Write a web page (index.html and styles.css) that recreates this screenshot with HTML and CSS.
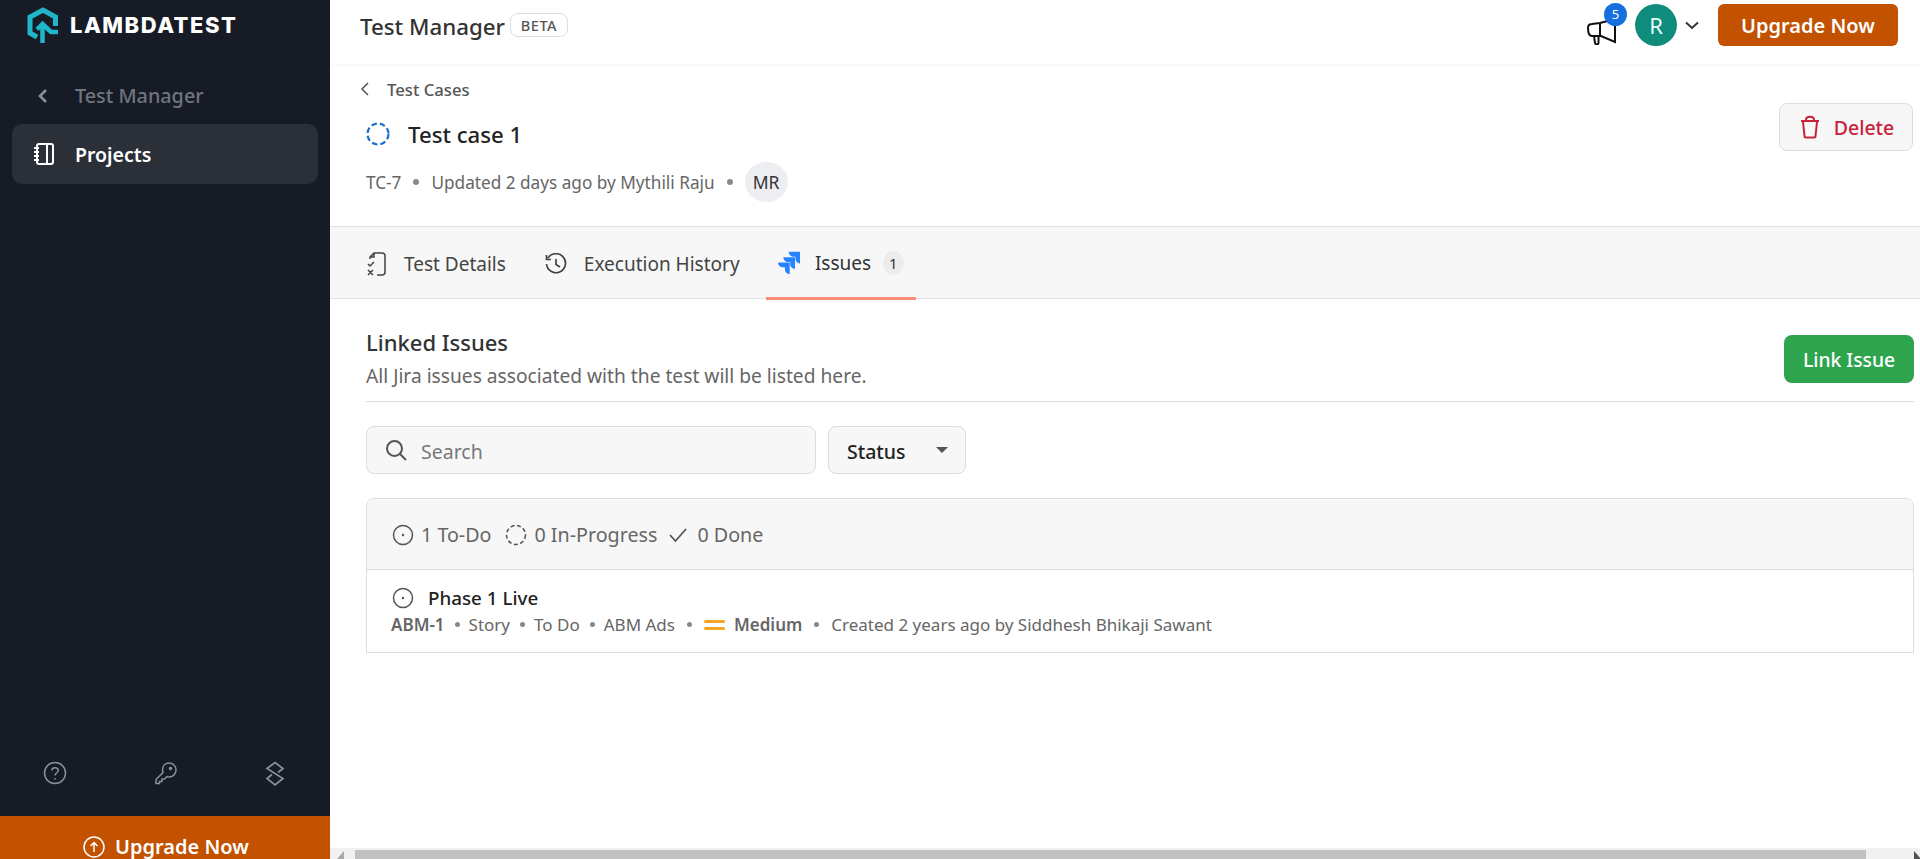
FILE: index.html
```html
<!DOCTYPE html>
<html lang="en">
<head>
  <meta charset="UTF-8" />
  <title>Test Manager</title>
  <link rel="stylesheet" href="styles.css">
</head>
<body>
  <aside class="sidebar">
    <div class="logo">
      <svg class="logo-mark" width="32" height="44" viewBox="0 0 32 44" fill="none" stroke="#1fb6c9" stroke-width="5">
        <path d="M10 34 L3 30 V14 L16 7 L28.500 14 V23" />
        <path d="M15.500 40 V22 M10 26.500 L15.500 21 L24 29 H31" stroke-width="4.500" />
      </svg>
      <span class="logo-text">LAMBDATEST</span>
    </div>
    <div class="side-back">
      <svg width="12" height="16" viewBox="0 0 12 16" fill="none" stroke="#8b9099" stroke-width="2.500"><path d="M9 2 L3 8 L9 14" /></svg>
      <span>Test Manager</span>
    </div>
    <div class="side-item">
      <svg width="22" height="24" viewBox="0 0 22 24" fill="none" stroke="#fff" stroke-width="2">
        <rect x="4" y="2" width="16" height="20" rx="2" />
        <path d="M14 2 V22 M1 6 H6 M1 10 H6 M1 14 H6 M1 18 H6" />
      </svg>
      <span>Projects</span>
    </div>
    <div class="side-icons">
      <svg width="24" height="24" viewBox="0 0 24 24" fill="none" stroke="#8b9099" stroke-width="1.500">
        <circle cx="12" cy="12" r="10.500" />
        <path d="M8.800 9.500 C9 5.800 15.200 5.800 15.200 9.500 C15.200 12 12 12 12 14.500 M12 17 V18.500" />
      </svg>
      <svg width="24" height="24" viewBox="0 0 24 24" fill="none" stroke="#8b9099" stroke-width="1.500">
        <path d="M15 2 C19 2 22 5 22 9 C22 13 19 16 15 16 C14 16 13.500 16 13 15.500 L10.500 18 H8 V20.500 H5.500 V22.500 H2 V18.500 L9 11.500 C8.500 10.500 8.500 10 8.500 9 C8.500 5 11 2 15 2 Z" />
        <circle cx="16.500" cy="7.500" r="1" fill="#8b9099" />
      </svg>
      <svg width="22" height="26" viewBox="0 0 22 26" fill="none" stroke="#8b9099" stroke-width="1.700">
        <path d="M14 11.500 L19 7.500 L11 1.500 L3 7.500 L19 17.500 L11 24 L3 17.500 L8 13.500" />
      </svg>
    </div>
    <div class="side-upgrade">
      <svg width="22" height="22" viewBox="0 0 22 22" fill="none" stroke="#fff" stroke-width="1.500">
        <circle cx="11" cy="11" r="10" />
        <path d="M11 16 V6.500 M7.500 10 L11 6.500 L14.500 10" />
      </svg>
      <span>Upgrade Now</span>
    </div>
  </aside>

  <div class="main">
    <header class="topbar">
      <div class="product">
        <span class="product-name">Test Manager</span>
        <span class="beta">BETA</span>
      </div>
      <div class="top-actions">
        <div class="announce">
          <svg width="34" height="30" viewBox="0 0 34 30" fill="none" stroke="#111" stroke-width="2">
            <path d="M2 13 C2 10 4 9 6 9 L14 8 L29 4 V27 L15 21 H6 C3 21 2 18 2 13 Z M14 8 V21 M8 21 L9 28 C10 30 12 30 12.500 28 V22" />
          </svg>
          <span class="count">5</span>
        </div>
        <span class="avatar">R</span>
        <svg class="caret" width="14" height="9" viewBox="0 0 14 9" fill="none" stroke="#333" stroke-width="2"><path d="M1 1.500 L7 7 L13 1.500" /></svg>
        <button class="btn-upgrade">Upgrade Now</button>
      </div>
    </header>

    <section class="case-head">
      <div class="case-info">
        <div class="crumb">
          <svg width="9" height="14" viewBox="0 0 9 14" fill="none" stroke="#555" stroke-width="1.500"><path d="M8 1 L2 7 L8 13" /></svg>
          <span>Test Cases</span>
        </div>
        <div class="case-title">
          <svg width="24" height="24" viewBox="0 0 24 24" fill="none" stroke="#1a6fc9" stroke-width="2.200" stroke-dasharray="5.500 3"><circle cx="12" cy="12" r="10.500" /></svg>
          <h1>Test case 1</h1>
        </div>
        <div class="case-meta">
          <span>TC-7</span>
          <i class="dot"></i>
          <span>Updated 2 days ago by Mythili Raju</span>
          <i class="dot"></i>
          <span class="initials">MR</span>
        </div>
      </div>
      <button class="btn-delete">
        <svg width="20" height="24" viewBox="0 0 20 24" fill="none" stroke="#c8223a" stroke-width="2">
          <path d="M1 6 H19 M6 5 C6 0.800 14 0.800 14 5 M3 7 L4.500 21 C4.500 22 5 22.500 6 22.500 H14 C15 22.500 15.500 22 15.500 21 L17 7" />
        </svg>
        <span>Delete</span>
      </button>
    </section>

    <nav class="tabs">
      <div class="tab">
        <svg width="20" height="24" viewBox="0 0 20 24" fill="none" stroke="#444" stroke-width="1.500">
          <path d="M3 7 V5 L7 1 H15 C17 1 18 2 18 4 V20 C18 22 17 23 15 23 H10 M7 1 V5 H3 M1 12 L3 14 L7 10 M1 18 L6 23 M6 18 L1 23" />
        </svg>
        <span>Test Details</span>
      </div>
      <div class="tab">
        <svg width="22" height="22" viewBox="0 0 22 22" fill="none" stroke="#444" stroke-width="1.700">
          <path d="M3 5 A9.500 9.500 0 1 1 1.500 11 M1.500 2 V6.500 H6 M11 6 V11.500 L15 14" />
        </svg>
        <span>Execution History</span>
      </div>
      <div class="tab tab-active">
        <svg width="24" height="24" viewBox="0 0 24 24">
          <path id="jira-piece" d="M23 0 H11.500 C11.500 2.900 13.800 5.200 16.700 5.200 H18.800 V7.300 C18.800 10.200 21.100 12.500 24 12.500 V1 A1 1 0 0 0 23 0 Z" fill="#2684ff" />
          <use href="#jira-piece" x="-5.700" y="5.700" />
          <use href="#jira-piece" x="-11.400" y="11.400" />
        </svg>
        <span>Issues</span>
        <span class="tab-count">1</span>
      </div>
    </nav>

    <section class="issues">
      <div class="issues-head">
        <div>
          <h2>Linked Issues</h2>
          <p>All Jira issues associated with the test will be listed here.</p>
        </div>
        <button class="btn-link">Link Issue</button>
      </div>

      <div class="filters">
        <div class="search">
          <svg width="22" height="22" viewBox="0 0 22 22" fill="none" stroke="#555" stroke-width="2"><circle cx="9.500" cy="9.500" r="7.500" /><path d="M15 15 L21 21" /></svg>
          <span>Search</span>
        </div>
        <div class="status">
          <span>Status</span>
          <i class="arrow"></i>
        </div>
      </div>

      <div class="issue-list">
        <div class="list-head">
          <svg class="circle-icon" width="22" height="22" viewBox="0 0 22 22" fill="none" stroke="#555" stroke-width="1.500"><circle cx="11" cy="11" r="9.500" /><circle cx="11" cy="11" r="1.200" fill="#555" stroke="none" /></svg>
          <span>1 To-Do</span>
          <svg class="circle-icon" width="22" height="22" viewBox="0 0 22 22" fill="none" stroke="#555" stroke-width="1.500" stroke-dasharray="4 2.500"><circle cx="11" cy="11" r="9.500" /></svg>
          <span>0 In-Progress</span>
          <svg class="check-icon" width="20" height="16" viewBox="0 0 20 16" fill="none" stroke="#555" stroke-width="1.800"><path d="M2 8 L7.500 14 L18 2" /></svg>
          <span class="done">0 Done</span>
        </div>
        <div class="issue-row">
          <div class="issue-title">
            <svg width="22" height="22" viewBox="0 0 22 22" fill="none" stroke="#555" stroke-width="1.500"><circle cx="11" cy="11" r="9.500" /><circle cx="11" cy="11" r="1.200" fill="#555" stroke="none" /></svg>
            <span>Phase 1 Live</span>
          </div>
          <div class="issue-meta">
            <b>ABM-1</b>
            <i class="dot small"></i><span>Story</span>
            <i class="dot small"></i><span>To Do</span>
            <i class="dot small"></i><span>ABM Ads</span>
            <i class="dot small wide"></i>
            <span class="prio"><i></i><i></i></span>
            <b>Medium</b>
            <i class="dot small wide"></i>
            <span>Created 2 years ago by Siddhesh Bhikaji Sawant</span>
          </div>
        </div>
      </div>
    </section>

    <div class="hscroll">
      <svg class="scroll-arrow" width="8" height="8" viewBox="0 0 8 8"><path d="M7 0 V8 H0 Z" fill="#a8a8a8" /></svg>
      <div class="scroll-thumb"></div>
      <svg class="scroll-arrow scroll-end" width="8" height="8" viewBox="0 0 8 8"><path d="M0 0 V8 H7 Z" fill="#505050" /></svg>
    </div>
  </div>
</body>
</html>
```

FILE: styles.css
```css
* {
  box-sizing: border-box;
}
body {
  margin: 0;
  height: 859px;
  display: flex;
  overflow: hidden;
  font-family: "Noto Sans", Arial, sans-serif;
  color: #333;
  background: #fff;
}
h1, h2, p {
  margin: 0;
  font-weight: 500;
}
button {
  font-family: inherit;
  cursor: pointer;
}

/* sidebar */
.sidebar {
  width: 330px;
  flex-shrink: 0;
  display: flex;
  flex-direction: column;
  background: #161b26;
}
.logo {
  height: 50px;
  padding-left: 27px;
  display: flex;
  align-items: center;
  gap: 11px;
}
.logo-text {
  font-family: Inter, sans-serif;
  font-weight: 800;
  font-size: 22px;
  letter-spacing: 1.5px;
  color: #fff;
}
.side-back {
  height: 74px;
  padding: 17px 0 0 37px;
  display: flex;
  align-items: center;
  gap: 26px;
  font-size: 19.800px;
  font-weight: 500;
  color: #70757e;
}
.side-item {
  height: 60px;
  margin: 0 12px;
  padding-left: 21px;
  display: flex;
  align-items: center;
  gap: 20px;
  border-radius: 10px;
  background: #2a2f38;
  font-size: 19.500px;
  font-weight: 600;
  color: #fff;
}
.side-icons {
  margin-top: auto;
  height: 55px;
  padding: 0 44px 0 43px;
  display: flex;
  align-items: flex-start;
  justify-content: space-between;
}
.side-upgrade {
  height: 43px;
  padding: 19px 0 0 83px;
  display: flex;
  align-items: center;
  gap: 10px;
  overflow: hidden;
  background: #c25100;
  font-size: 20px;
  font-weight: 600;
  color: #fff;
}
.side-upgrade span {
  line-height: 22px;
}

/* top bar */
.main {
  flex: 1;
  min-width: 0;
  display: flex;
  flex-direction: column;
}
.topbar {
  height: 67px;
  flex-shrink: 0;
  padding: 4px 22px 0 30px;
  display: flex;
  align-items: flex-start;
  justify-content: space-between;
  border-bottom: 3px solid #fafafa;
}
.product {
  height: 42px;
  display: flex;
  align-items: center;
  gap: 5px;
}
.product-name {
  padding-top: 2px;
  font-size: 22.300px;
  font-weight: 500;
}
.beta {
  width: 58px;
  height: 24px;
  border: 1px solid #ddd;
  border-radius: 8px;
  font-size: 14.500px;
  line-height: 22px;
  text-align: center;
  font-weight: 500;
  letter-spacing: 0.5px;
  color: #555;
}
.top-actions {
  display: flex;
  align-items: center;
}
.announce {
  position: relative;
  width: 35px;
  height: 36px;
  margin-right: 14px;
  padding-top: 8px;
}
.count {
  position: absolute;
  top: -4px;
  left: 18px;
  width: 23px;
  height: 23px;
  border-radius: 50%;
  background: #1670e0;
  color: #fff;
  font-size: 13px;
  line-height: 23px;
  text-align: center;
}
.avatar {
  width: 42px;
  height: 42px;
  border-radius: 50%;
  background: #0f8c7c;
  color: #e8fbf7;
  font-size: 22px;
  line-height: 42px;
  text-align: center;
}
.caret {
  margin: 0 19px 0 8px;
}
.btn-upgrade {
  width: 180px;
  height: 42px;
  padding: 0;
  border: none;
  border-radius: 6px;
  background: #c25100;
  color: #fff;
  font-size: 20px;
  font-weight: 600;
}

/* test case header */
.case-head {
  height: 159px;
  flex-shrink: 0;
  padding: 0 7px 0 30px;
  display: flex;
  justify-content: space-between;
}
.crumb {
  height: 45px;
  padding-bottom: 1px;
  display: flex;
  align-items: center;
  gap: 18px;
  font-size: 16.700px;
  font-weight: 500;
  color: #555;
}
.case-title {
  height: 44px;
  padding-left: 6px;
  display: flex;
  align-items: center;
  gap: 18px;
}
h1 {
  font-size: 22.200px;
  color: #222;
}
.case-meta {
  height: 50px;
  margin-top: 1px;
  padding-left: 6px;
  display: flex;
  align-items: center;
  gap: 12px;
  font-size: 17.200px;
  color: #666;
}
.dot {
  width: 6px;
  height: 6px;
  border-radius: 50%;
  background: #888;
}
.initials {
  width: 43px;
  height: 40px;
  border-radius: 50%;
  background: #eceef2;
  color: #333;
  font-size: 17.500px;
  line-height: 40px;
  text-align: center;
}
.btn-delete {
  width: 134px;
  height: 48px;
  margin-top: 36px;
  padding: 0 0 0 2px;
  display: flex;
  align-items: center;
  justify-content: center;
  gap: 14px;
  border: 1px solid #ddd;
  border-radius: 8px;
  background: #f7f7f7;
  color: #c8223a;
  font-size: 19.500px;
  font-weight: 500;
}

/* tabs */
.tabs {
  height: 73px;
  flex-shrink: 0;
  padding: 0 0 0 37px;
  display: flex;
  align-items: stretch;
  background: #f7f7f7;
  border-top: 1px solid #e2e2e2;
  border-bottom: 1px solid #e2e2e2;
}
.tab {
  display: flex;
  align-items: center;
  gap: 17px;
  margin-right: 39px;
  padding-top: 2px;
  font-size: 19px;
  color: #444;
}
.tab-active {
  width: 150px;
  height: 73px;
  margin-left: -13px;
  padding: 2px 12px 0;
  gap: 15px;
  border-bottom: 3px solid #f98c7a;
  color: #333;
}
.tab-count {
  width: 22px;
  height: 24px;
  margin-left: -3px;
  border-radius: 50%;
  background: #ececec;
  font-size: 15px;
  line-height: 24px;
  text-align: center;
}

/* linked issues */
.issues {
  flex: 1;
  min-height: 0;
  padding: 0 6px 0 36px;
}
.issues-head {
  height: 103px;
  padding-top: 28px;
  display: flex;
  justify-content: space-between;
  align-items: flex-start;
  border-bottom: 1px solid #ddd;
}
.issues-head h2 {
  font-size: 22px;
  line-height: 30px;
  color: #333;
}
.issues-head p {
  margin-top: 5px;
  font-size: 19.200px;
  line-height: 28px;
  font-weight: 400;
  color: #666;
}
.btn-link {
  width: 130px;
  height: 48px;
  margin-top: 8px;
  padding: 0;
  border: none;
  border-radius: 8px;
  background: #2ea44f;
  color: #fff;
  font-size: 19.300px;
  font-weight: 500;
}
.filters {
  margin-top: 24px;
  display: flex;
  gap: 12px;
}
.search {
  width: 450px;
  height: 48px;
  padding: 0 0 0 18px;
  display: flex;
  align-items: center;
  gap: 14px;
  border: 1px solid #ddd;
  border-radius: 8px;
  background: #f7f7f7;
  font-size: 19.500px;
  color: #777;
}
.search span,
.status span {
  padding-top: 2px;
}
.status {
  width: 138px;
  height: 48px;
  padding: 0 17px 0 18px;
  display: flex;
  align-items: center;
  justify-content: space-between;
  border: 1px solid #ddd;
  border-radius: 8px;
  background: #f7f7f7;
  font-size: 19.500px;
  font-weight: 500;
  color: #222;
}
.arrow {
  width: 0;
  height: 0;
  border-left: 6px solid transparent;
  border-right: 6px solid transparent;
  border-top: 6px solid #555;
}
.issue-list {
  margin-top: 24px;
  border: 1px solid #ddd;
  border-radius: 8px 8px 0 0;
}
.list-head {
  height: 71px;
  padding: 1px 0 0 25px;
  display: flex;
  align-items: center;
  gap: 7px;
  border-bottom: 1px solid #ddd;
  border-radius: 8px 8px 0 0;
  background: #f7f7f7;
  font-size: 19.700px;
  color: #666;
}
.list-head .circle-icon + span + .circle-icon {
  margin-left: 7px;
}
.check-icon {
  margin-left: 4px;
}
.done {
  margin-left: 2px;
}
.issue-row {
  height: 82px;
  padding: 15px 0 0 25px;
}
.issue-title {
  display: flex;
  align-items: center;
  gap: 14px;
  font-size: 18.800px;
  font-weight: 500;
  color: #222;
}
.issue-meta {
  margin: 2px 0 0 -1px;
  display: flex;
  align-items: center;
  font-size: 17px;
  color: #666;
}
.issue-meta b {
  font-weight: 600;
}
.dot.small {
  width: 5px;
  height: 5px;
  margin: 0 9px 0 10px;
}
.dot.small.wide {
  margin: 0 12px;
}
.prio {
  width: 21px;
  margin-right: 9px;
  display: flex;
  flex-direction: column;
  gap: 4px;
}
.prio i {
  height: 3px;
  border-radius: 2px;
  background: #f5a623;
}

/* bottom scrollbar */
.hscroll {
  height: 11px;
  flex-shrink: 0;
  padding-left: 7px;
  display: flex;
  align-items: flex-start;
  gap: 10px;
  background: #f1f1f1;
}
.scroll-arrow {
  margin-top: 3px;
}
.scroll-thumb {
  width: 1511px;
  height: 11px;
  margin-top: 2px;
  background: #c1c1c1;
}
.scroll-end {
  margin-left: auto;
  margin-right: -2px;
}
```
